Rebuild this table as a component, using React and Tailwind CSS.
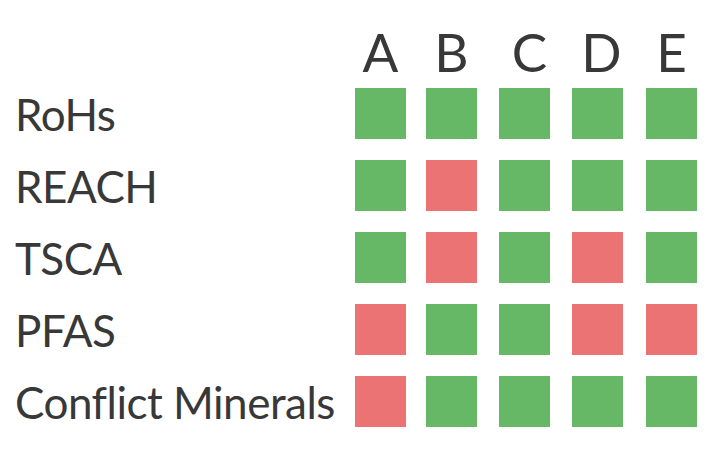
import React from 'react';

const G = 'bg-[#66b866]';
const R = 'bg-[#ec7373]';

const rows = [
    { name: 'RoHs', cells: [1, 1, 1, 1, 1] },
    { name: 'REACH', cells: [1, 0, 1, 1, 1] },
    { name: 'TSCA', cells: [1, 0, 1, 0, 1] },
    { name: 'PFAS', cells: [0, 1, 1, 0, 0] },
    { name: 'Conflict Minerals', cells: [0, 1, 1, 1, 1] },
];

const cols = [
    { c: 'A', cls: 'pl-0' },
    { c: 'B', cls: 'pl-0' },
    { c: 'C', cls: 'pl-[10px]' },
    { c: 'D', cls: 'pl-[8px]' },
    { c: 'E', cls: 'pl-0' },
];

export default function App() {
    return (
        <div className="w-[708px] h-[472px] bg-white text-[#383838] font-['Lato',sans-serif] overflow-hidden">
            <div className="pt-[21px]">
                <div className="grid grid-cols-[355px_71px_73px_73px_74px_51px] h-[60px] items-center">
                    <div></div>
                    {cols.map(({ c, cls }) => (
                        <div key={c} className={`w-[51px] text-center text-[53px] leading-none ${cls}`}>{c}</div>
                    ))}
                </div>

                <div className="mt-[7px] flex flex-col gap-[21px]">
                    {rows.map((row) => (
                        <div key={row.name} className="grid grid-cols-[355px_71px_73px_73px_74px_51px] h-[51px] items-center">
                            <div className="pl-[15px] text-[44px] leading-none whitespace-nowrap tracking-[-0.5px]">{row.name}</div>
                            {row.cells.map((ok, i) => (
                                <div key={i} className={`w-[51px] h-[51px] ${ok ? G : R}`}></div>
                            ))}
                        </div>
                    ))}
                </div>
            </div>
        </div>
    );
}
